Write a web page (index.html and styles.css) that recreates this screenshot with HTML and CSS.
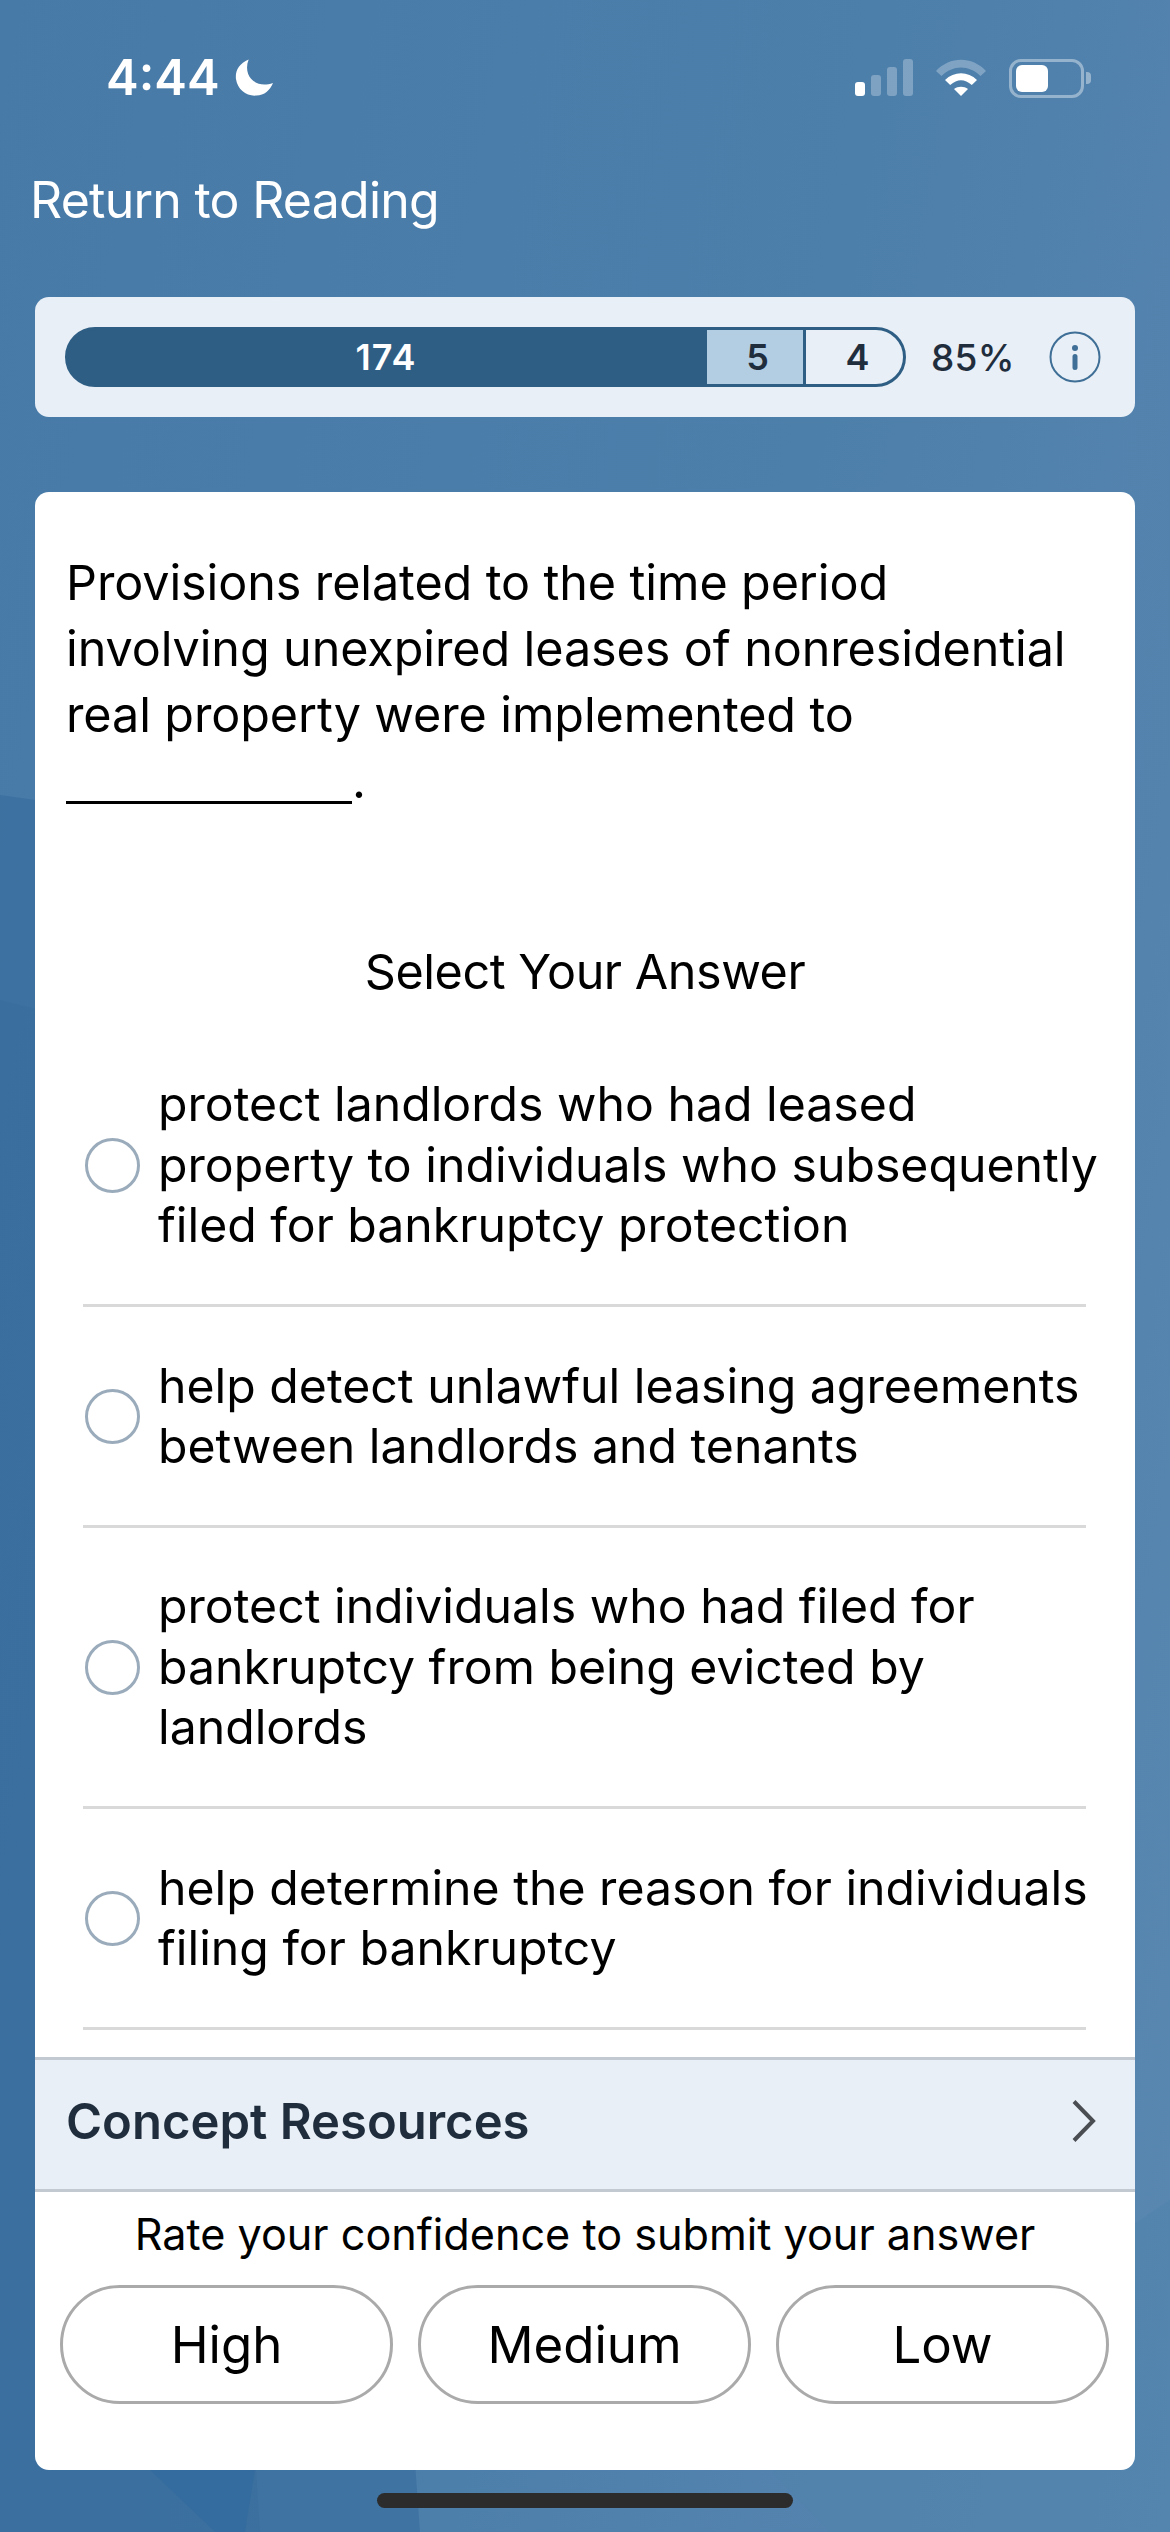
FILE: index.html
```html
<!DOCTYPE html>
<html lang="en">
<head>
<meta charset="utf-8">
<title>Question</title>
<link rel="stylesheet" href="styles.css">
</head>
<body>
<div class="screen">
  <svg class="backdrop" viewBox="0 0 1170 2532" aria-hidden="true">
    <polygon points="0,795 35,800 300,860 420,2532 0,2532" fill="#35699b" opacity=".55"/>
    <polygon points="0,1000 160,1040 260,2532 0,2532" fill="#33699c" opacity=".35"/>
    <polygon points="150,2470 255,2470 245,2532 215,2532" fill="#2f6a9e" opacity=".55"/>
    <polygon points="770,2470 1170,2200 1170,2532 830,2532" fill="#5183ad" opacity=".55"/>
  </svg>

  <div class="status">
    <div class="status-left">
      <span class="clock">4:44</span>
      <svg class="moon" viewBox="0 0 40 40" aria-hidden="true"><path d="M14 1 C4 5 0 13 1 21 C2.500 32 12 39 22 38 C30 37.500 36 32.500 39 25 C27 29 17 25 13.500 16 C11.800 11 12 6 14 1 Z"/></svg>
    </div>
    <div class="status-right">
      <svg class="signal" viewBox="0 0 58 38" aria-hidden="true">
        <rect x="0" y="23" width="10" height="14" rx="3" fill="#fff"/>
        <rect x="16" y="16" width="10" height="21" rx="3" fill="#fff" opacity=".28"/>
        <rect x="32" y="8" width="10" height="29" rx="3" fill="#fff" opacity=".28"/>
        <rect x="48" y="0" width="10" height="37" rx="3" fill="#fff" opacity=".28"/>
      </svg>
      <svg class="wifi" viewBox="0 0 50 38" aria-hidden="true">
        <path d="M0 12 C14 -3 36 -3 50 12 L44.500 17 C33 5.500 17 5.500 5.500 17 Z" fill="#fff" opacity=".28"/>
        <path d="M9 21 C18 12 32 12 41 21 L35.800 26 C28.500 19.500 21.500 19.500 14.200 26 Z" fill="#fff"/>
        <path d="M18 30 C22 27 28 27 32 30 L25 37 Z" fill="#fff"/>
      </svg>
      <div class="battery"><div class="battery-body"><div class="battery-fill"></div></div><div class="battery-cap"></div></div>
    </div>
  </div>

  <div class="back">Return to Reading</div>

  <div class="progress-card">
    <div class="bar">
      <div class="seg seg-done">174</div>
      <div class="seg seg-mid">5</div>
      <div class="seg seg-rest">4</div>
    </div>
    <span class="percent">85%</span>
    <svg class="info" viewBox="0 0 52 52" aria-hidden="true">
      <circle cx="26" cy="26" r="24.500" fill="none" stroke="#3f6f96" stroke-width="2"/>
      <circle cx="26" cy="17" r="3" fill="#3f6f96"/>
      <rect x="23.500" y="23" width="5" height="16" rx="2.500" fill="#3f6f96"/>
    </svg>
  </div>

  <main class="card">
    <p class="question">Provisions related to the time period involving unexpired leases of nonresidential real property were implemented to <span class="blank"></span>.</p>
    <h2 class="select">Select Your Answer</h2>
    <ul class="options">
      <li class="option option-three"><span class="radio"></span><span class="option-text">protect landlords who had leased property to individuals who subsequently filed for bankruptcy protection</span></li>
      <li class="option option-two"><span class="radio"></span><span class="option-text">help detect unlawful leasing agreements between landlords and tenants</span></li>
      <li class="option option-three"><span class="radio"></span><span class="option-text">protect individuals who had filed for bankruptcy from being evicted by landlords</span></li>
      <li class="option option-two"><span class="radio"></span><span class="option-text">help determine the reason for individuals filing for bankruptcy</span></li>
    </ul>
    <div class="resources">
      <span>Concept Resources</span>
      <svg class="chevron" viewBox="0 0 24 42" aria-hidden="true"><path d="M2 1.500 L21 21 L2 40.500" fill="none" stroke="#4a4d52" stroke-width="4"/></svg>
    </div>
    <p class="rate">Rate your confidence to submit your answer</p>
    <div class="buttons">
      <button class="pill">High</button>
      <button class="pill">Medium</button>
      <button class="pill">Low</button>
    </div>
  </main>

  <div class="home"></div>
</div>
</body>
</html>
```

FILE: styles.css
```css
* { box-sizing: border-box; }
html, body { margin: 0; padding: 0; }
body { width: 1170px; height: 2532px; overflow: hidden; font-family: Inter, "Noto Sans", sans-serif; }
.screen {
  position: relative;
  width: 1170px;
  height: 2532px;
  padding: 0 35px;
  background: linear-gradient(100deg, #477aa7 0%, #4d7fab 55%, #5987b0 100%);
  display: flex;
  flex-direction: column;
}
.backdrop { position: absolute; left: 0; top: 0; width: 1170px; height: 2532px; }
.status, .back, .progress-card, .card, .home { position: relative; }

.status {
  height: 156px;
  flex: none;
  margin: 0 -35px;
  padding: 0 79px 0 106px;
  display: flex;
  align-items: center;
  justify-content: space-between;
  color: #fff;
}
.status-left { display: flex; align-items: center; gap: 15px; }
.clock { font-size: 49px; font-weight: 600; line-height: 60px; }
.moon { width: 39px; height: 40px; fill: #fff; }
.status-right { display: flex; align-items: center; }
.signal { width: 58px; height: 38px; margin-right: 23px; }
.wifi { width: 50px; height: 38px; margin-right: 23px; }
.battery { display: flex; align-items: center; gap: 2px; }
.battery-body { width: 75px; height: 39px; border: 3px solid rgba(255,255,255,.4); border-radius: 12px; padding: 3px 4px; }
.battery-fill { width: 32px; height: 100%; background: #fff; border-radius: 6px; }
.battery-cap { width: 5px; height: 12px; background: rgba(255,255,255,.4); border-radius: 0 4px 4px 0; }

.back { height: 88px; flex: none; margin-left: -5px; color: #fff; font-size: 50px; line-height: 88px; font-weight: 400; letter-spacing: -.75px; }

.progress-card {
  flex: none;
  height: 120px;
  margin-top: 53px;
  padding: 30px 34px 30px 30px;
  display: flex;
  align-items: center;
  background: #e8eff6;
  border-radius: 14px;
}
.bar {
  width: 841px;
  height: 60px;
  flex: none;
  display: flex;
  border: 3px solid #2f5e84;
  border-radius: 30px;
  overflow: hidden;
  font-size: 36px;
  font-weight: 600;
  background: linear-gradient(to right, #2f5e84 642px, transparent 642px);
}
.seg { display: flex; align-items: center; justify-content: center; height: 100%; }
.seg-done { width: 639px; padding-right: 3px; color: #fff; letter-spacing: 1px; }
.seg-mid { width: 99px; padding-left: 5px; background: #b3cee3; color: #1f2d3d; border-right: 3px solid #2f5e84; }
.seg-rest { flex: 1; padding-left: 6px; color: #1f2d3d; }
.percent { margin-left: 25px; font-size: 37px; font-weight: 500; color: #1f2d3d; letter-spacing: .3px; }
.info { width: 52px; height: 52px; margin-left: auto; }

.card {
  flex: none;
  height: 1978px;
  margin-top: 75px;
  background: #fff;
  border-radius: 14px;
  overflow: hidden;
  display: flex;
  flex-direction: column;
}
.question {
  margin: 58px 0 0;
  padding: 0 67px 0 31px;
  font-size: 48.500px;
  letter-spacing: -.1px;
  line-height: 66px;
  color: #000;
  font-weight: 400;
}
.blank { display: inline-block; width: 286px; height: 3px; background: #000; vertical-align: -6px; }
.select {
  margin: 125px 0 0;
  text-align: center;
  font-size: 48.500px;
  letter-spacing: -.45px;
  line-height: 66px;
  font-weight: 400;
  color: #000;
}
.options { list-style: none; margin: 21px 0 0; padding: 0 49px 0 48px; }
.option {
  display: flex;
  align-items: center;
  gap: 18px;
  border-bottom: 3px solid #d9d9d9;
  font-size: 48.200px;
  line-height: 60.500px;
  color: #000;
}
.option-text { flex: 1; margin-right: -13px; }
.option-three { height: 281px; }
.option-two { height: 221px; }
.radio { flex: none; width: 55px; height: 55px; margin-left: 2px; border: 3px solid #9aabbb; border-radius: 50%; }

.resources {
  height: 135px;
  flex: none;
  margin-top: 27px;
  padding: 0 39px 7px 31px;
  display: flex;
  align-items: center;
  justify-content: space-between;
  background: #e8eff6;
  border-top: 3px solid #c3c9d1;
  border-bottom: 3px solid #c3c9d1;
  font-size: 49px;
  font-weight: 600;
  color: #1f2d3d;
}
.chevron { width: 24px; height: 42px; }
.rate { margin: 12px 0 0; text-align: center; font-size: 43.200px; line-height: 60px; color: #000; }
.buttons { display: flex; justify-content: space-between; padding: 0 26px 0 25px; margin-top: 21px; }
.pill {
  width: 333px;
  height: 119px;
  border: 3px solid #aaa;
  border-radius: 60px;
  background: #fff;
  font-family: inherit;
  font-size: 51px;
  color: #000;
}
.home { flex: none; width: 416px; height: 15px; margin: 23px auto 0; background: #2c2c2c; border-radius: 8px; }
```
